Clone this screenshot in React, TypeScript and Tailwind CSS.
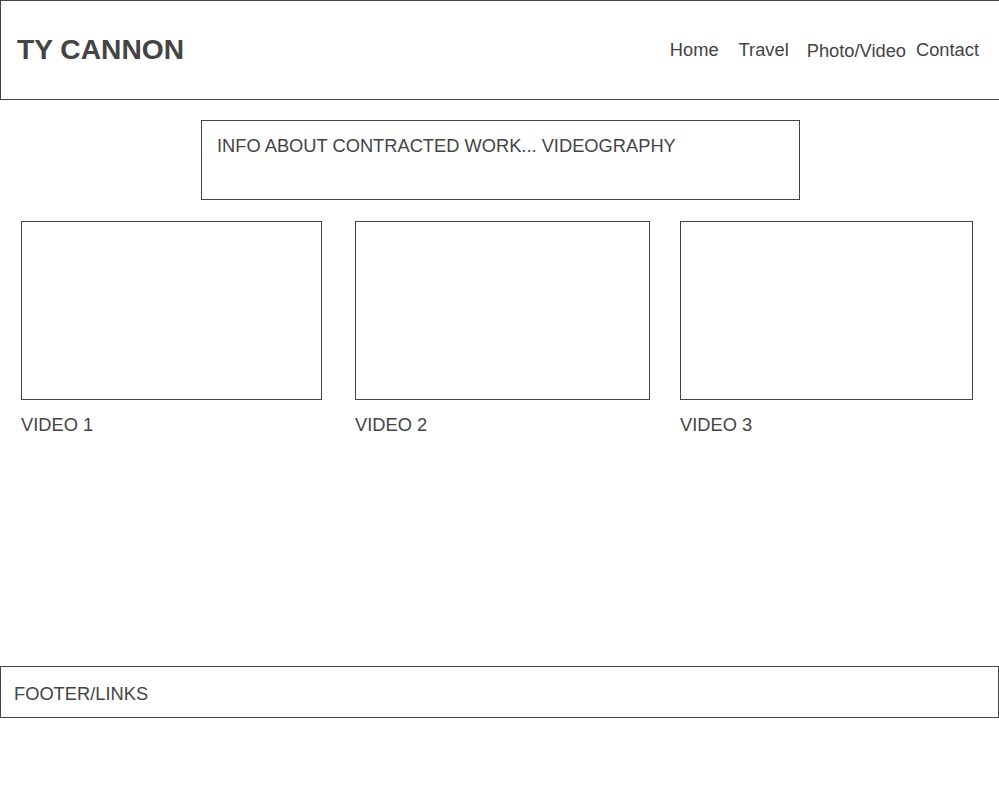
export default function App() {
  const videos = [
    { label: "VIDEO 1", w: "w-[301px]", ml: "ml-[21px]" },
    { label: "VIDEO 2", w: "w-[295px]", ml: "ml-[33px]" },
    { label: "VIDEO 3", w: "w-[293px]", ml: "ml-[30px]" },
  ];
  return (
    <div
      className="w-[999px] min-h-[803px] bg-white text-[#444444] overflow-hidden"
      style={{ fontFamily: '"Liberation Sans", Arial, sans-serif' }}
    >
      <header className="h-[100px] border-t border-b border-l border-[#444444] flex items-center justify-between">
        <h1 className="pl-[16px] pb-[2px] text-[28.2px] font-bold leading-[32px]">TY CANNON</h1>
        <nav className="flex items-center text-[18.3px] leading-[21px] pr-[20px] pb-[2px]">
          <span>Home</span>
          <span className="ml-[20px]">Travel</span>
          <span className="ml-[18px] mt-[2px]">Photo/Video</span>
          <span className="ml-[10px]">Contact</span>
        </nav>
      </header>
      <main className="h-[566px] pt-[20px]">
        <section className="ml-[201px] w-[599px] h-[80px] border border-[#444444] pl-[15px] pt-[14px] text-[18.3px] leading-[21px]">
          INFO ABOUT CONTRACTED WORK... VIDEOGRAPHY
        </section>
        <div className="flex mt-[21px]">
          {videos.map((v) => (
            <div key={v.label} className={`${v.ml} ${v.w}`}>
              <div className="h-[179px] border border-[#444444]" />
              <div className="mt-[14px] text-[18.3px] leading-[21px]">{v.label}</div>
            </div>
          ))}
        </div>
      </main>
      <footer className="h-[52px] border border-[#444444] pl-[13px] pt-[16px] text-[18.3px] leading-[21px]">
        FOOTER/LINKS
      </footer>
    </div>
  );
}
